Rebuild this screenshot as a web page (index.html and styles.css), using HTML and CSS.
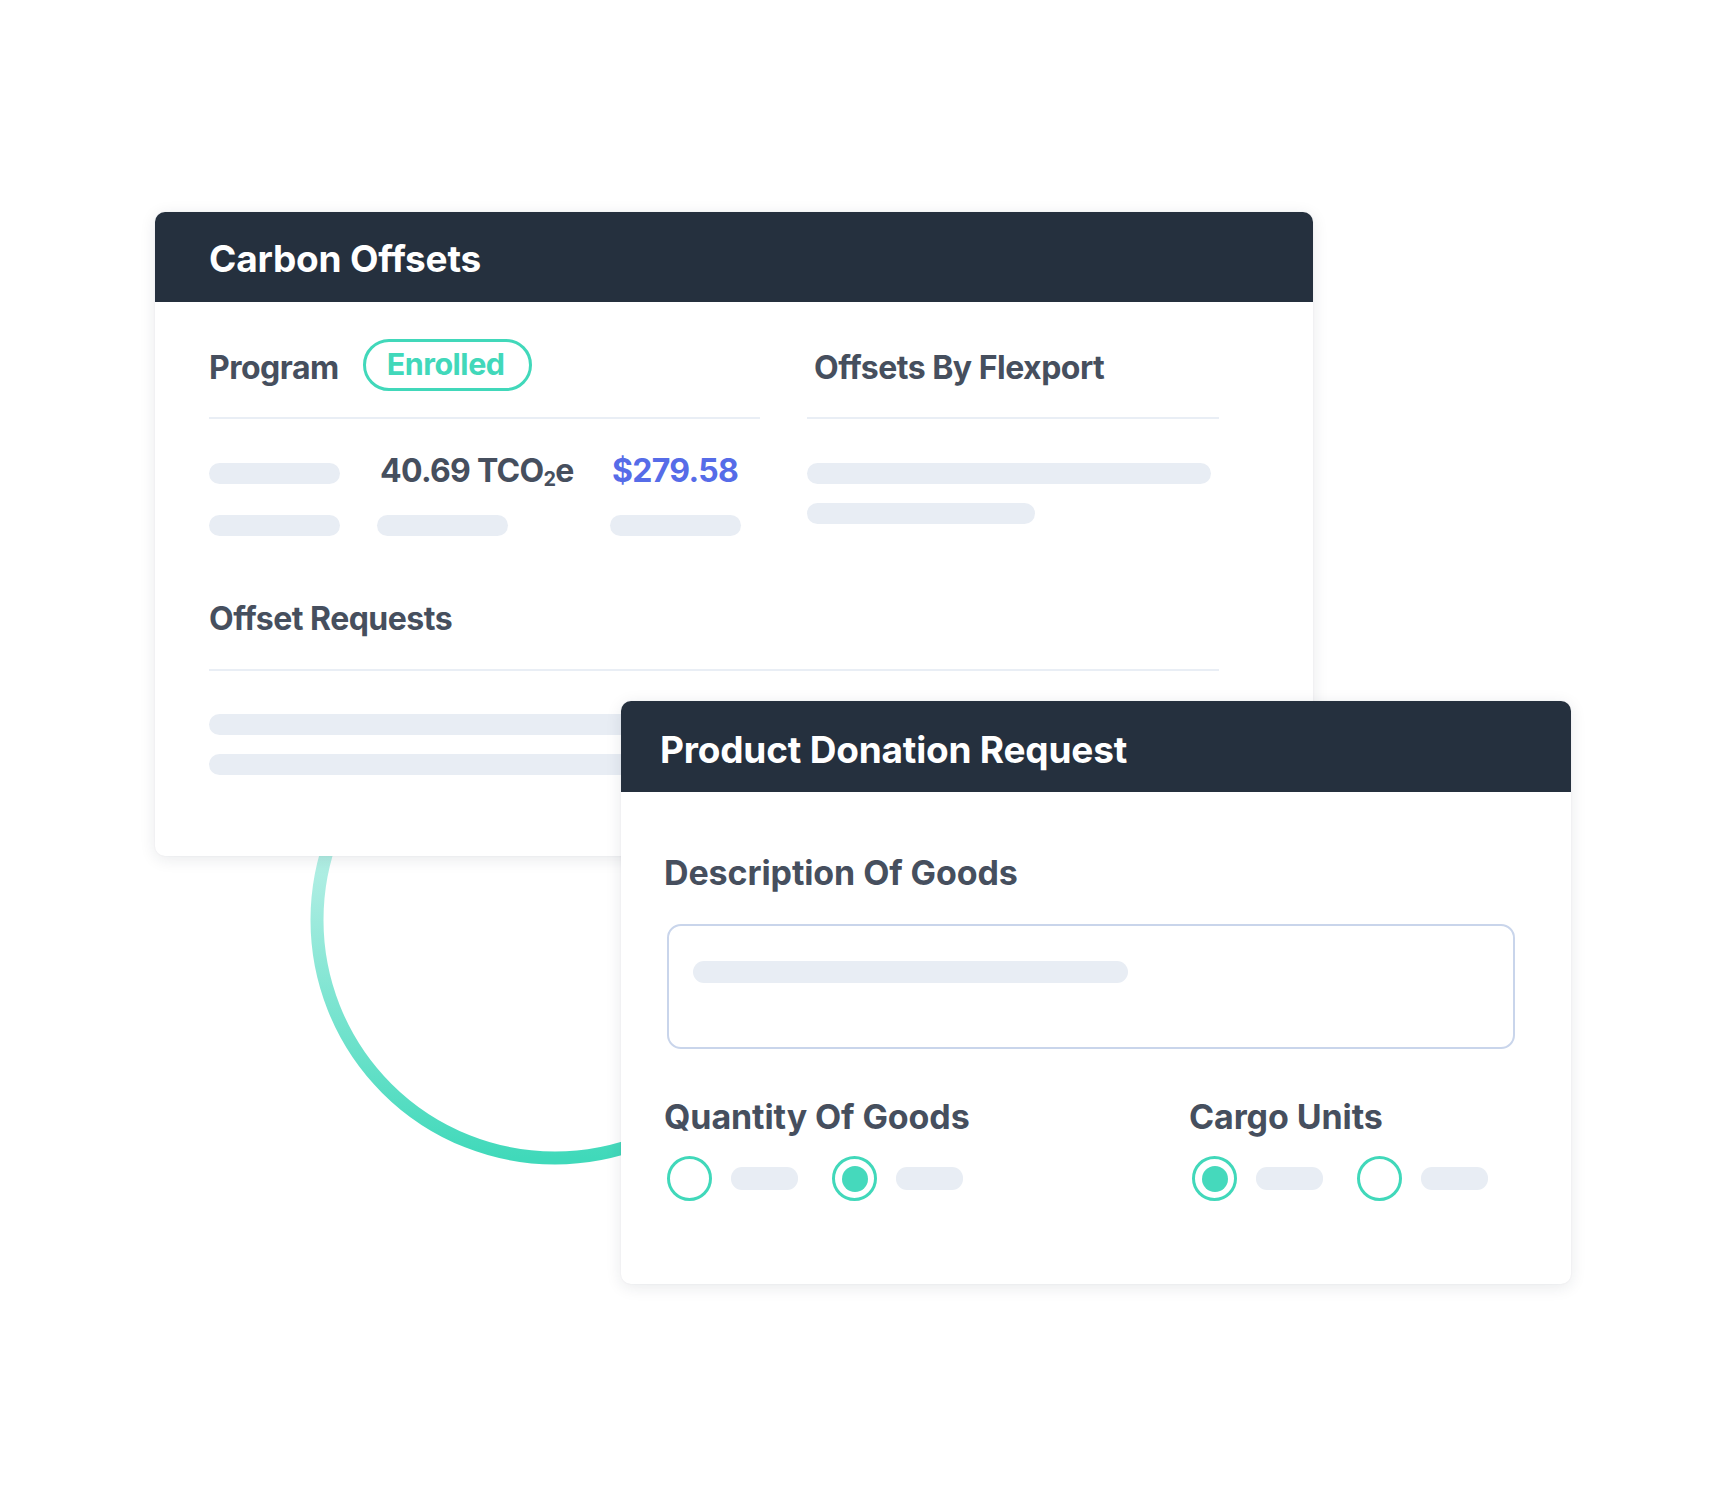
FILE: index.html
```html
<!DOCTYPE html>
<html lang="en">
<head>
<meta charset="utf-8">
<title>Carbon Offsets</title>
<link rel="stylesheet" href="styles.css">
</head>
<body>
<div class="stage">
  <svg class="ring" width="520" height="520" viewBox="0 0 520 520" aria-hidden="true">
    <defs>
      <linearGradient id="ringGrad" x1="0" y1="0" x2="0" y2="1">
        <stop offset="0" stop-color="#e4fbf6"/>
        <stop offset="0.45" stop-color="#a6ece0"/>
        <stop offset="1" stop-color="#40d9ba"/>
      </linearGradient>
    </defs>
    <circle cx="260" cy="260" r="238" fill="none" stroke="url(#ringGrad)" stroke-width="13"/>
  </svg>

  <section class="card card-offsets">
    <header class="card-head head-offsets"><h1 class="card-title">Carbon Offsets</h1></header>
    <div class="co-body">
      <div class="co-top">
        <div class="col">
          <div class="sec-head">
            <span class="label">Program</span>
            <span class="pill">Enrolled</span>
          </div>
          <div class="rule"></div>
          <div class="vals">
            <div class="vals-row">
              <span class="bar bar-131"></span>
              <span class="val val-tco">40.69 TCO<sub>2</sub>e</span>
              <span class="val val-price">$279.58</span>
            </div>
            <div class="vals-row row-2">
              <span class="bar bar-131"></span>
              <span class="bar bar-131"></span>
              <span class="bar bar-131"></span>
            </div>
          </div>
        </div>
        <div class="col">
          <div class="sec-head">
            <span class="label label-right">Offsets By Flexport</span>
          </div>
          <div class="rule"></div>
          <div class="stack">
            <span class="bar bar-404"></span>
            <span class="bar bar-228"></span>
          </div>
        </div>
      </div>
      <div class="requests">
        <div class="label label-line">Offset Requests</div>
        <div class="rule rule-req"></div>
        <div class="stack stack-req">
          <span class="bar bar-full"></span>
          <span class="bar bar-full"></span>
        </div>
      </div>
    </div>
  </section>

  <section class="card card-donation">
    <header class="card-head head-donation"><h2 class="card-title">Product Donation Request</h2></header>
    <div class="pd-body">
      <div class="label label-pd label-desc">Description Of Goods</div>
      <div class="input-box"><span class="bar bar-435"></span></div>
      <div class="pd-grid">
        <div class="field">
          <div class="label label-pd">Quantity Of Goods</div>
          <div class="radios">
            <span class="radio"></span><span class="bar bar-67"></span>
            <span class="radio checked"></span><span class="bar bar-67"></span>
          </div>
        </div>
        <div class="field">
          <div class="label label-pd">Cargo Units</div>
          <div class="radios">
            <span class="radio checked"></span><span class="bar bar-67"></span>
            <span class="radio"></span><span class="bar bar-67"></span>
          </div>
        </div>
      </div>
    </div>
  </section>
</div>
</body>
</html>
```

FILE: styles.css
```css
* { box-sizing: border-box; }

html, body {
  margin: 0;
  padding: 0;
  background: #ffffff;
}

body {
  font-family: Inter, "Noto Sans", "Liberation Sans", sans-serif;
  color: #464f5e;
}

.stage {
  position: relative;
  width: 1728px;
  height: 1495px;
  overflow: hidden;
}

.ring {
  position: absolute;
  left: 295px;
  top: 660px;
}

.card {
  position: absolute;
  background: #ffffff;
  border-radius: 10px;
  overflow: hidden;
  box-shadow: 0 3px 16px rgba(30, 40, 60, 0.10), 0 0 2px rgba(30, 40, 60, 0.06);
}

.card-offsets {
  left: 155px;
  top: 212px;
  width: 1158px;
  height: 644px;
}

.card-donation {
  left: 621px;
  top: 701px;
  width: 950px;
  height: 583px;
}

.card-head {
  background: #25303e;
  display: flex;
  align-items: center;
}

.head-offsets {
  height: 90px;
  padding: 4px 0 0 54px;
}

.head-donation {
  height: 91px;
  padding: 7px 0 0 39px;
}

.card-title {
  margin: 0;
  color: #ffffff;
  font-size: 37px;
  font-weight: 700;
  letter-spacing: -0.2px;
  line-height: 1.21;
}

.label {
  font-size: 32px;
  font-weight: 650;
  line-height: 40px;
  color: #464f5e;
  letter-spacing: -0.5px;
  white-space: nowrap;
}

.label-pd {
  font-size: 34px;
  letter-spacing: -0.1px;
  margin-left: -3px;
}

.label-right {
  margin-left: 7px;
}

.bar {
  display: block;
  height: 21px;
  border-radius: 11px;
  background: #e8edf4;
  flex: none;
}

.bar-131 { width: 131px; }
.bar-404 { width: 404px; }
.bar-228 { width: 228px; }
.bar-full { width: 100%; }
.bar-435 { width: 435px; height: 22px; }
.bar-67 { width: 67px; height: 23px; }

.rule {
  height: 2px;
  background: #e9eef5;
}

/* Carbon offsets body */
.co-body {
  padding: 37px 94px 0 54px;
}

.co-top {
  display: grid;
  grid-template-columns: 551px 412px;
  column-gap: 47px;
}

.sec-head {
  display: flex;
  align-items: flex-start;
  height: 52px;
  gap: 24px;
}

.sec-head .label {
  margin-top: 9px;
}

.col .rule {
  margin-top: 26px;
}

.pill {
  height: 52px;
  border: 3px solid #41d8ba;
  border-radius: 26px;
  padding: 0 24px 0 21px;
  color: #41d8ba;
  font-size: 30.5px;
  font-weight: 650;
  line-height: 44px;
  letter-spacing: -0.5px;
}

.vals {
  margin-top: 34px;
}

.vals-row {
  display: grid;
  grid-template-columns: 168px 233px 131px;
  align-items: center;
  height: 40px;
}

.vals-row.row-2 {
  height: 21px;
  margin-top: 22px;
}

.val {
  font-size: 32px;
  font-weight: 650;
  line-height: 40px;
  margin-top: -4px;
  letter-spacing: -0.7px;
  white-space: nowrap;
}

.val-tco {
  padding-left: 3px;
  color: #464f5e;
}

.val sub {
  font-size: 0.62em;
  vertical-align: -0.22em;
  line-height: 0;
}

.val-price {
  padding-left: 2px;
  color: #566ce8;
}

.stack {
  display: flex;
  flex-direction: column;
  gap: 19px;
  margin-top: 44px;
}

.requests {
  margin-top: 63px;
}

.rule-req {
  margin-top: 30px;
}

.stack-req {
  margin-top: 43px;
}

/* Product donation body */
.pd-body {
  padding: 61px 56px 0 46px;
}

.input-box {
  margin-top: 31px;
  height: 125px;
  border: 2px solid #c9d5eb;
  border-radius: 14px;
  padding: 35px 0 0 24px;
}

.pd-grid {
  display: grid;
  grid-template-columns: 525px 1fr;
  margin-top: 48px;
}

.radios {
  display: flex;
  align-items: center;
  margin-top: 19px;
}

.radio {
  width: 45px;
  height: 45px;
  border: 3px solid #41d8ba;
  border-radius: 50%;
  background: #ffffff;
  display: flex;
  align-items: center;
  justify-content: center;
  flex: none;
}

.radio.checked::after {
  content: "";
  width: 26px;
  height: 26px;
  border-radius: 50%;
  background: #45d9bc;
}

.radios .bar {
  margin-left: 19px;
}

.radios .bar + .radio {
  margin-left: 34px;
}
```
